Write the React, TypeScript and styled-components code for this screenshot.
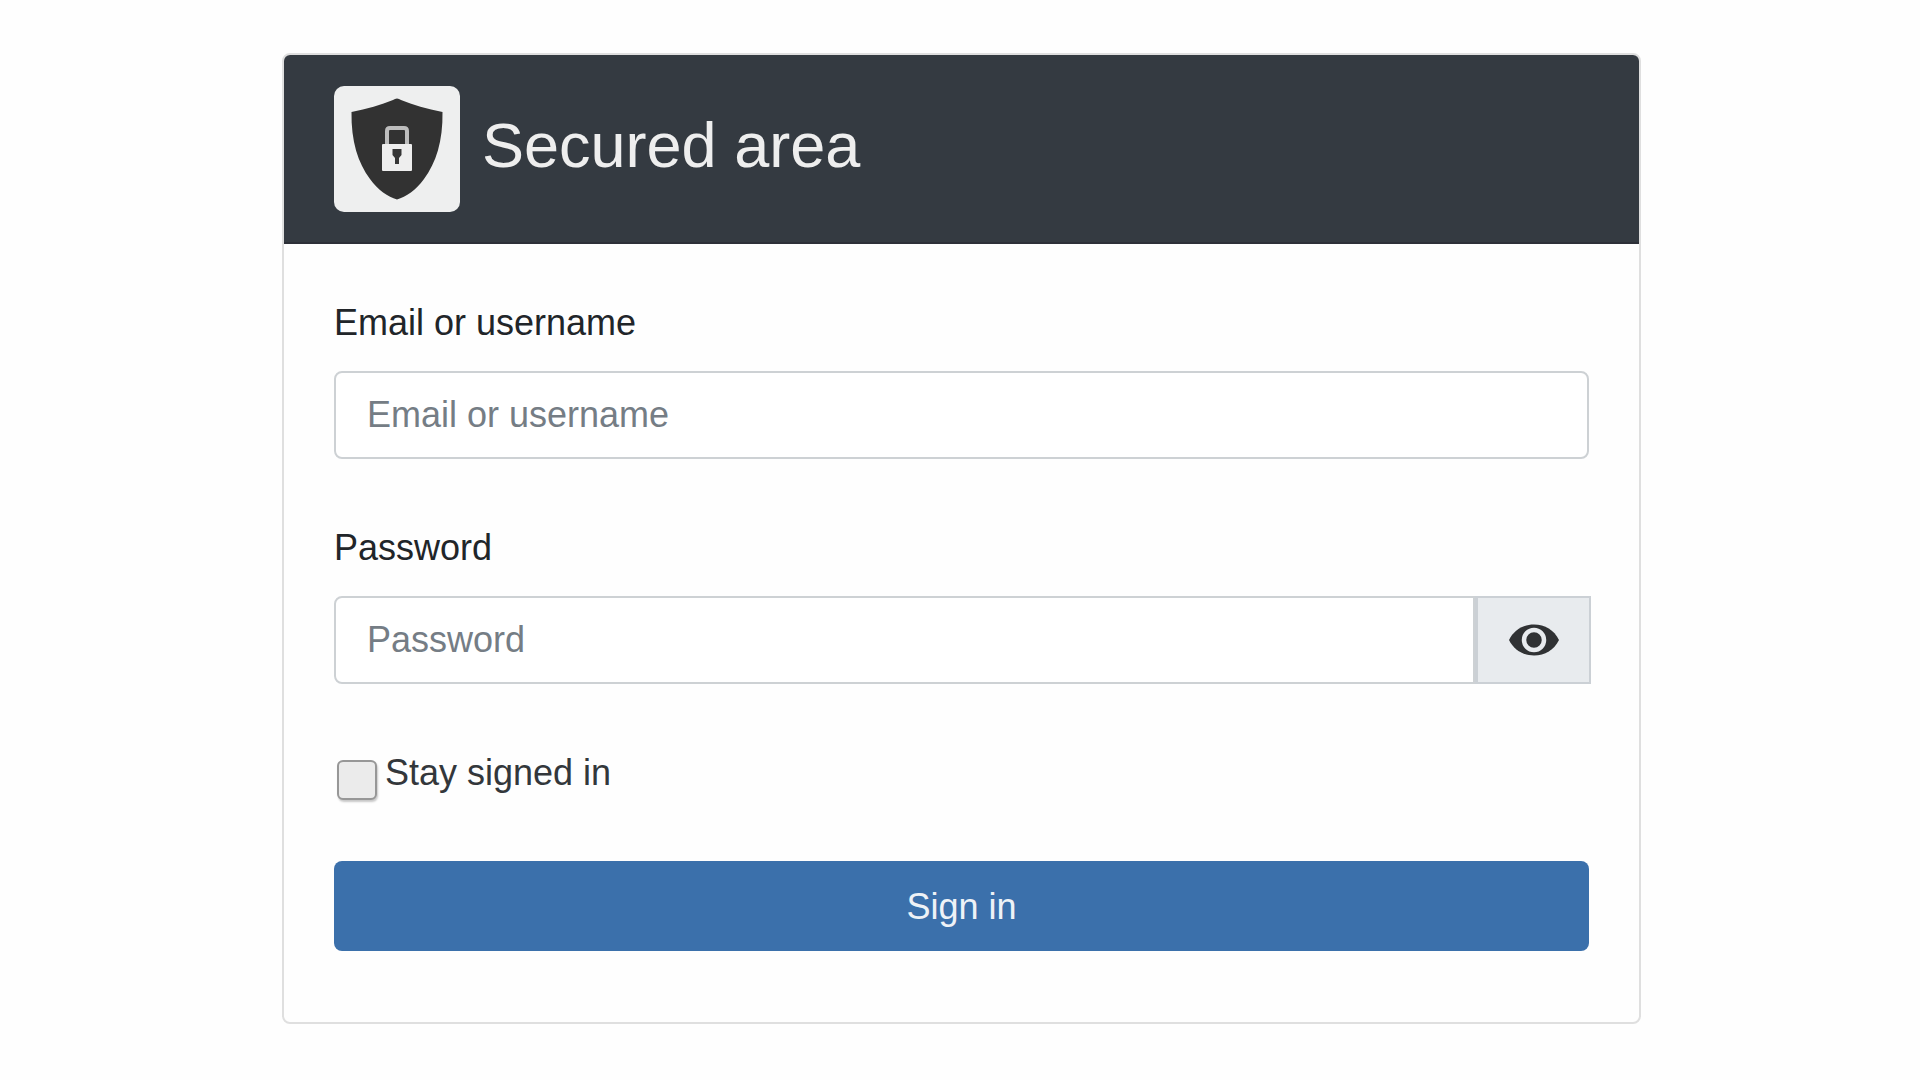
import React, { useState } from "react";
import styled, { createGlobalStyle } from "styled-components";

const GlobalStyle = createGlobalStyle`
  *, *::before, *::after { box-sizing: border-box; }
  body {
    margin: 0;
    background: #fefefe;
    color: #212529;
    font-family: "Liberation Sans", Arial, sans-serif;
    font-size: 36px;
    line-height: 55px;
  }
  button, input { font: inherit; }
`;

const Page = styled.main`
  padding: 53px 279px 56px 282px;
  @media (max-width: 1200px) {
    padding: 24px;
  }
`;

const Card = styled.section`
  background: #fefefe;
  border: 2px solid #dfdfdf;
  border-radius: 8px;
`;

const CardHeader = styled.header`
  display: flex;
  align-items: center;
  gap: 22px;
  padding: 31px 50px 30px;
  background: #343a41;
  border-bottom: 2px solid #2d3038;
  border-radius: 6px 6px 0 0;
`;

const LogoTile = styled.span`
  display: flex;
  flex: none;
  width: 126px;
  height: 126px;
  background: #eeefef;
  border-radius: 10px;
`;

const Title = styled.h1`
  margin: 0;
  padding-bottom: 8px;
  color: #eeeeee;
  font-size: 63px;
  font-weight: 400;
  line-height: 76px;
`;

const Form = styled.form`
  display: flex;
  flex-direction: column;
  gap: 61px;
  padding: 51px 50px 71px;
`;

const Field = styled.div`
  display: flex;
  flex-direction: column;
  gap: 21px;
`;

const TextInput = styled.input<{ $grouped?: boolean }>`
  flex: 1 1 auto;
  width: 100%;
  min-width: 0;
  height: 88px;
  padding: 0 31px;
  color: #495057;
  background: #ffffff;
  border: 2px solid #cdd1d4;
  border-radius: ${(p) => (p.$grouped ? "8px 0 0 8px" : "8px")};
  &::placeholder {
    color: #757d85;
    opacity: 1;
  }
`;

const InputGroup = styled.div`
  display: flex;
  margin-right: -2px;
`;

const RevealButton = styled.button`
  display: flex;
  flex: none;
  align-items: center;
  justify-content: center;
  width: 116px;
  padding: 0;
  background: #e8ebee;
  border: 2px solid #cbd0d5;
  border-left-width: 3px;
  cursor: pointer;
`;

const CheckRow = styled.div`
  display: flex;
  align-items: flex-end;
  gap: 8px;
  padding-left: 3px;
  color: #33373b;
`;

const Checkbox = styled.input`
  flex: none;
  appearance: none;
  width: 40px;
  height: 40px;
  margin: 0;
  background: #ebebeb;
  border: 2px solid #979797;
  border-radius: 6px;
  box-shadow: 1px 2px 2px #c8c8c8;
  &:checked {
    background: #3b70ab;
  }
`;

const SubmitButton = styled.button`
  height: 90px;
  padding: 0;
  color: #eef2f7;
  background: #3b70ab;
  border: 0;
  border-radius: 8px;
  cursor: pointer;
`;

const ShieldLogo = () => (
  <svg width="126" height="126" viewBox="0 0 126 126" aria-hidden="true">
    <path
      d="M63 12.500Q65 12.500 67 14C79 19 93 23 108.500 26C109 55 102 77 90 93C82 104 72 111 63 113.500C54 111 44 104 36 93C24 77 17 55 17.500 26C33 23 47 19 59 14Q61 12.500 63 12.500Z"
      fill="#323232"
    />
    <path
      d="M53 60V45Q53 42 56 42H70Q73 42 73 45V60"
      fill="none"
      stroke="#bdbdbd"
      strokeWidth="4"
    />
    <rect x="48" y="58" width="30" height="27" rx="1" fill="#eeeeee" />
    <path d="M58.500 63H67.500V69L65 72V78H61V72L58.500 69Z" fill="#363636" />
  </svg>
);

const EyeIcon = () => (
  <svg width="50" height="32" viewBox="0 0 50 32" aria-hidden="true">
    <path d="M0 16C5 6 14 0.500 25 0.500S45 6 50 16C45 26 36 31.500 25 31.500S5 26 0 16Z" fill="#303234" />
    <circle cx="25" cy="16" r="10" fill="#303234" stroke="#e8ebee" strokeWidth="4.500" />
  </svg>
);

export default function App() {
  const [visible, setVisible] = useState(false);

  return (
    <>
      <GlobalStyle />
      <Page>
        <Card>
          <CardHeader>
            <LogoTile>
              <ShieldLogo />
            </LogoTile>
            <Title>Secured area</Title>
          </CardHeader>
          <Form onSubmit={(event) => event.preventDefault()}>
            <Field>
              <label htmlFor="username">Email or username</label>
              <TextInput id="username" type="text" placeholder="Email or username" />
            </Field>
            <Field>
              <label htmlFor="password">Password</label>
              <InputGroup>
                <TextInput
                  id="password"
                  type={visible ? "text" : "password"}
                  placeholder="Password"
                  $grouped
                />
                <RevealButton
                  type="button"
                  aria-label="Show password"
                  aria-pressed={visible}
                  onClick={() => setVisible(!visible)}
                >
                  <EyeIcon />
                </RevealButton>
              </InputGroup>
            </Field>
            <CheckRow>
              <Checkbox id="stay" type="checkbox" />
              <label htmlFor="stay">Stay signed in</label>
            </CheckRow>
            <SubmitButton type="submit">Sign in</SubmitButton>
          </Form>
        </Card>
      </Page>
    </>
  );
}
